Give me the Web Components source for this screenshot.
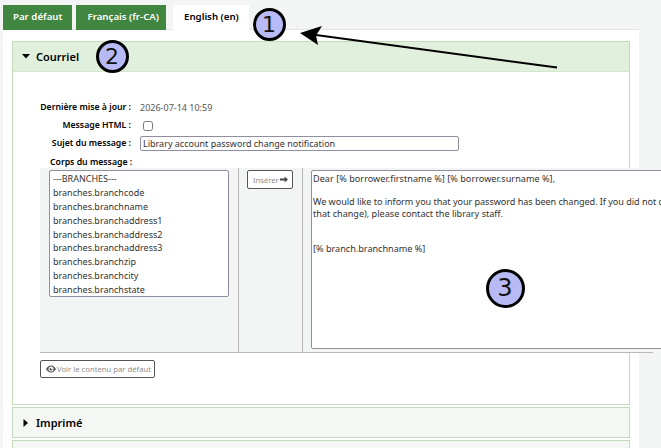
<!DOCTYPE html>
<html lang="fr">
<head>
<meta charset="utf-8">
<title>Notice</title>
<style>
    html, body { margin: 0; height: 448px; overflow: hidden; }
    body {
        position: relative;
        background: #f3f4f4;
        font-family: "Noto Sans", sans-serif;
        color: #000;
    }
</style>
</head>
<body>
<lang-tabs>
    <lang-tab>Par défaut</lang-tab>
    <lang-tab style="padding:0 7px 0 11px">Français (fr-CA)</lang-tab>
    <lang-tab active>English (en)</lang-tab>
</lang-tabs>

<tab-panel>
    <accordion-section title="Courriel" open>
        <form-row label="Dernière mise à jour :"><span style="color:#555;font-size:9px">2026-07-14 10:59</span></form-row>
        <form-row label="Message HTML :"><input type="checkbox" style="margin:2px 0 0 3px;width:10px;height:10px;display:block"></form-row>
        <form-row label="Sujet du message :"><text-box>Library account password change notification</text-box></form-row>
        <body-editor></body-editor>
    </accordion-section>
    <accordion-section title="Imprimé"></accordion-section>
    <accordion-section title=""></accordion-section>
</tab-panel>

<anno-mark x="269" y="24" size="33" font="22">1</anno-mark>
<anno-mark x="112" y="56" size="33" font="22">2</anno-mark>
<anno-mark x="505" y="288" size="39" font="24">3</anno-mark>
<anno-arrow></anno-arrow>

<script>
    class LangTabs extends HTMLElement {
        constructor() {
            super();
            this.attachShadow({ mode: 'open' });
            this.shadowRoot.innerHTML = `
                <style>
                    :host { display: flex; gap: 4px; padding: 5px 0 0 3px; height: 25px; }
                </style>
                <slot></slot>
            `;
        }
    }

    class LangTab extends HTMLElement {
        constructor() {
            super();
            this.attachShadow({ mode: 'open' });
            this.shadowRoot.innerHTML = `
                <style>
                    :host {
                        display: block;
                        padding: 0 10px;
                        height: 25px;
                        line-height: 24px;
                        background: #408540;
                        color: #fff;
                        font-size: 9.7px;
                        font-weight: 600;
                        white-space: nowrap;
                        position: relative;
                        z-index: 1;
                    }
                    :host([active]) { background: #fff; color: #000; margin-left: 3px; padding: 0 10px 0 11px; }
                </style>
                <slot></slot>
            `;
        }
    }

    class TabPanel extends HTMLElement {
        constructor() {
            super();
            this.attachShadow({ mode: 'open' });
            this.shadowRoot.innerHTML = `
                <style>
                    :host {
                        display: block;
                        box-sizing: border-box;
                        width: 636px;
                        margin: -1px 0 0 3px;
                        padding: 11px 9px 0;
                        background: #fff;
                        border-top: 1px solid #e2e4e4;
                    }
                </style>
                <slot></slot>
            `;
        }
    }

    class AccordionSection extends HTMLElement {
        constructor() {
            super();
            this.attachShadow({ mode: 'open' });
            const open = this.hasAttribute('open');
            const arrow = open ? 'M0 0H8L4 4.5Z' : 'M1.5 -1L6 3L1.5 7Z';
            this.shadowRoot.innerHTML = `
                <style>
                    :host {
                        display: block;
                        box-sizing: border-box;
                        border: 1px solid #c5d9bd;
                        margin-bottom: 2px;
                    }
                    header {
                        display: flex;
                        align-items: center;
                        gap: 6px;
                        height: 29px;
                        padding-left: 9px;
                        background: #f4f7f3;
                        font-size: 11px;
                        font-weight: 600;
                    }
                    :host([open]) header { background: #e1f0dc; border-bottom: 1px solid #d5e6cf; }
                    svg { width: 8px; height: 6px; overflow: visible; flex: none; }
                    .body { display: none; height: 332px; padding-top: 26px; box-sizing: border-box; }
                    :host([open]) .body { display: block; }
                </style>
                <header><svg viewBox="0 0 8 6"><path d="${arrow}" fill="#000"/></svg><span>${this.getAttribute('title')}</span></header>
                <div class="body"><slot></slot></div>
            `;
        }
    }

    class FormRow extends HTMLElement {
        constructor() {
            super();
            this.attachShadow({ mode: 'open' });
            this.shadowRoot.innerHTML = `
                <style>
                    :host {
                        display: grid;
                        grid-template-columns: 118px 1fr;
                        column-gap: 9px;
                        align-items: center;
                        height: 18px;
                        font-size: 8.7px;
                    }
                    label { text-align: right; font-weight: 600; white-space: nowrap; }
                </style>
                <label>${this.getAttribute('label')}</label>
                <div><slot></slot></div>
            `;
        }
    }

    class TextBox extends HTMLElement {
        constructor() {
            super();
            this.attachShadow({ mode: 'open' });
            this.shadowRoot.innerHTML = `
                <style>
                    :host {
                        display: block;
                        box-sizing: border-box;
                        width: 319px;
                        height: 15px;
                        line-height: 13px;
                        padding-left: 2px;
                        border: 1px solid #8f8f9d;
                        border-radius: 2px;
                        color: #333;
                        font-size: 9px;
                        white-space: nowrap;
                    }
                </style>
                <slot></slot>
            `;
        }
    }

    const FIELDS = ['---BRANCHES---', 'branches.branchcode', 'branches.branchname', 'branches.branchaddress1',
        'branches.branchaddress2', 'branches.branchaddress3', 'branches.branchzip', 'branches.branchcity', 'branches.branchstate'];

    class BodyEditor extends HTMLElement {
        constructor() {
            super();
            this.attachShadow({ mode: 'open' });
            this.shadowRoot.innerHTML = `
                <style>
                    :host { display: block; font-size: 9px; color: #333; width: 640px; }
                    .title { font-weight: 600; font-size: 8.7px; color: #000; margin-left: 37px; height: 12px; line-height: 12px; margin-top: 4px; }
                    .grid {
                        display: grid;
                        grid-template-columns: 199px 64px 1fr;
                        margin-left: 27px;
                        height: 185px;
                        background: #f3f4f4;
                        border-bottom: 1px solid #b9b9b9;
                        box-sizing: border-box;
                    }
                    .cell { padding: 2px 0 0 9px; border-right: 1px solid #b9b9b9; }
                    .cell:nth-child(2) { padding-left: 8px; }
                    .cell:last-child { border-right: 0; padding-left: 8px; }
                    .list {
                        box-sizing: border-box;
                        width: 180px;
                        height: 127px;
                        padding: 1px 0 0 3px;
                        background: #fff;
                        border: 1px solid #8f8f9d;
                        border-radius: 2px;
                    }
                    .list div { height: 13.9px; line-height: 13.9px; white-space: nowrap; }
                    button {
                        display: flex;
                        align-items: center;
                        gap: 1px;
                        font: inherit;
                        font-size: 7.6px;
                        color: #8e8e8e;
                        background: #fff;
                        border: 1px solid #555;
                        border-radius: 2px;
                        padding: 0 4px 0 5px;
                        white-space: nowrap;
                    }
                    .insert { width: 46px; height: 19px; }
                    .insert svg { width: 8px; height: 7px; flex: none; }
                    .area {
                        box-sizing: border-box;
                        width: 380px;
                        height: 179px;
                        padding: 2px 0 0 1px;
                        background: #fff;
                        border: 1px solid #8f8f9d;
                        border-radius: 2px;
                        font-size: 9.1px;
                        line-height: 11.7px;
                        white-space: pre;
                    }
                    .wide { letter-spacing: .035px; }
                    .tight { letter-spacing: -.05px; }
                    .view { margin: 7px 0 0 27px; height: 18px; width: 115px; font-size: 7.7px; padding-left: 5px; }
                    .view svg { width: 10px; height: 8px; flex: none; margin-right: 0; }
                </style>
                <div class="title">Corps du message :</div>
                <div class="grid">
                    <div class="cell"><div class="list">${FIELDS.map(f => `<div>${f}</div>`).join('')}</div></div>
                    <div class="cell"><button class="insert">Insérer<svg viewBox="0 0 8 7"><path d="M0 2.6H4.6V.4L8 3.500 4.6 6.6V4.4H0Z" fill="#444"/></svg></button></div>
                    <div class="cell"><div class="area"><span class="wide">Dear [% borrower.firstname %] [% borrower.surname %],</span>

<span class="tight">We would like to inform you that your password has been changed. If you did not c</span>
that change), please contact the library staff.


[% branch.branchname %]</div></div>
                </div>
                <button class="view"><svg viewBox="0 0 20 16"><path fill-rule="evenodd" fill="#555" d="M10 1C5.500 1 2 4.200 0 8c2 3.800 5.500 7 10 7s8-3.200 10-7c-2-3.800-5.500-7-10-7zM10 3a5 5 0 1 1 0 10a5 5 0 0 1 0-10zM10 5a3 3 0 1 0 3 3h-3z"/></svg>Voir le contenu par défaut</button>
            `;
        }
    }

    class AnnoMark extends HTMLElement {
        constructor() {
            super();
            this.attachShadow({ mode: 'open' });
            const size = +this.getAttribute('size');
            this.shadowRoot.innerHTML = `
                <style>
                    :host {
                        position: absolute;
                        left: ${this.getAttribute('x') - size / 2}px;
                        top: ${this.getAttribute('y') - size / 2}px;
                        box-sizing: border-box;
                        width: ${size}px;
                        height: ${size}px;
                        display: flex;
                        align-items: center;
                        justify-content: center;
                        border: 3px solid #000;
                        border-radius: 50%;
                        background: #b7baf5;
                        color: #111;
                        font-family: "DejaVu Sans", sans-serif;
                        font-size: ${this.getAttribute('font')}px;
                    }
                </style>
                <slot></slot>
            `;
        }
    }

    class AnnoArrow extends HTMLElement {
        constructor() {
            super();
            this.attachShadow({ mode: 'open' });
            this.shadowRoot.innerHTML = `
                <style>
                    :host { position: absolute; left: 295px; top: 22px; width: 270px; height: 50px; }
                    svg { display: block; width: 100%; height: 100%; }
                </style>
                <svg viewBox="295 22 270 50">
                    <path d="M557 67.500L316 35" stroke="#000" stroke-width="2" fill="none"/>
                    <path d="M300 33L322 26L316 35.500L318 45Z" fill="#000"/>
                </svg>
            `;
        }
    }

    customElements.define('lang-tabs', LangTabs);
    customElements.define('lang-tab', LangTab);
    customElements.define('tab-panel', TabPanel);
    customElements.define('accordion-section', AccordionSection);
    customElements.define('form-row', FormRow);
    customElements.define('text-box', TextBox);
    customElements.define('body-editor', BodyEditor);
    customElements.define('anno-mark', AnnoMark);
    customElements.define('anno-arrow', AnnoArrow);
</script>
</body>
</html>
